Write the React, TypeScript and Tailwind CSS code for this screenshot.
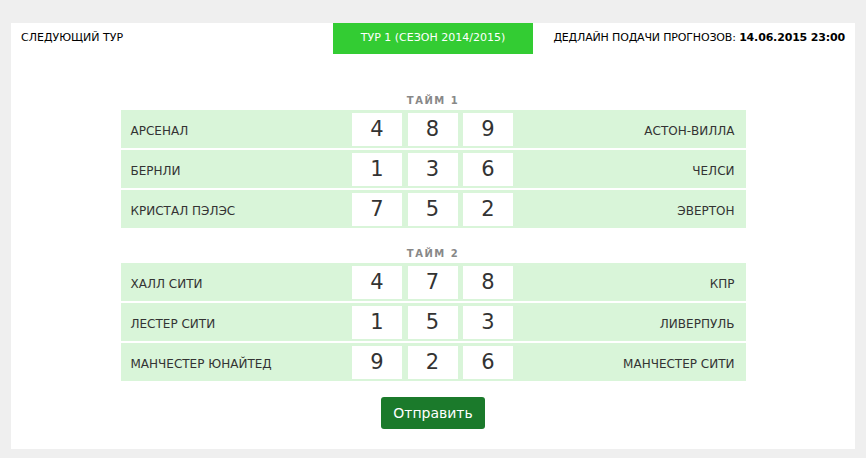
import React from "react";

type Match = { home: string; away: string; scores: number[] };

const halves: { title: string; matches: Match[] }[] = [
  {
    title: "ТАЙМ 1",
    matches: [
      { home: "АРСЕНАЛ", away: "АСТОН-ВИЛЛА", scores: [4, 8, 9] },
      { home: "БЕРНЛИ", away: "ЧЕЛСИ", scores: [1, 3, 6] },
      { home: "КРИСТАЛ ПЭЛЭС", away: "ЭВЕРТОН", scores: [7, 5, 2] },
    ],
  },
  {
    title: "ТАЙМ 2",
    matches: [
      { home: "ХАЛЛ СИТИ", away: "КПР", scores: [4, 7, 8] },
      { home: "ЛЕСТЕР СИТИ", away: "ЛИВЕРПУЛЬ", scores: [1, 5, 3] },
      { home: "МАНЧЕСТЕР ЮНАЙТЕД", away: "МАНЧЕСТЕР СИТИ", scores: [9, 2, 6] },
    ],
  },
];

const MatchRow = ({ match }: { match: Match }) => (
  <div className="flex h-[38px] items-center bg-[#d9f5d9]">
    <div className="flex-1 pl-[10px] pt-[3px] text-[12px] text-[#333]">{match.home}</div>
    <div className="flex gap-[5.5px]">
      {match.scores.map((s, i) => (
        <div
          key={i}
          className="flex h-[33px] w-[50px] items-center justify-center bg-white pt-[1px] text-[21px] text-[#333]"
        >
          {s}
        </div>
      ))}
    </div>
    <div className="flex-1 pr-[11px] pt-[3px] text-right text-[12px] text-[#333]">{match.away}</div>
  </div>
);

export default function App() {
  return (
    <div
      className="min-h-[458px] w-full bg-[#efefef] px-[11px] pt-[23px] pb-[9px]"
      style={{ fontFamily: '"DejaVu Sans", sans-serif' }}
    >
      <div className="h-[426px] bg-white">
        {/* header */}
        <div className="flex h-[31px] items-center text-[11px] text-black">
          <div className="flex-1 pl-[10px]">СЛЕДУЮЩИЙ ТУР</div>
          <div className="flex h-full w-[200px] items-center justify-center bg-[#33cc33] text-white">
            ТУР 1 (СЕЗОН 2014/2015)
          </div>
          <div className="flex-1 pr-[10px] text-right tracking-[-0.16px]">
            ДЕДЛАЙН ПОДАЧИ ПРОГНОЗОВ: <span className="font-bold">14.06.2015 23:00</span>
          </div>
        </div>

        <div className="mx-auto w-[625px] pt-[34px]">
          {halves.map((half, hi) => (
            <div key={hi} className={hi > 0 ? "mt-[13px]" : ""}>
              <div className="flex h-[22px] items-center justify-center pt-[2px] text-[10px] font-bold tracking-[1.5px] text-[#888]">
                {half.title}
              </div>
              <div className="flex flex-col gap-[2px]">
                {half.matches.map((m, i) => (
                  <MatchRow key={i} match={m} />
                ))}
              </div>
            </div>
          ))}

          <div className="mt-[16px] flex justify-center">
            <button className="h-[32px] w-[104px] rounded-[3px] bg-[#1b7a2b] text-[14px] text-white">
              Отправить
            </button>
          </div>
        </div>
      </div>
    </div>
  );
}
